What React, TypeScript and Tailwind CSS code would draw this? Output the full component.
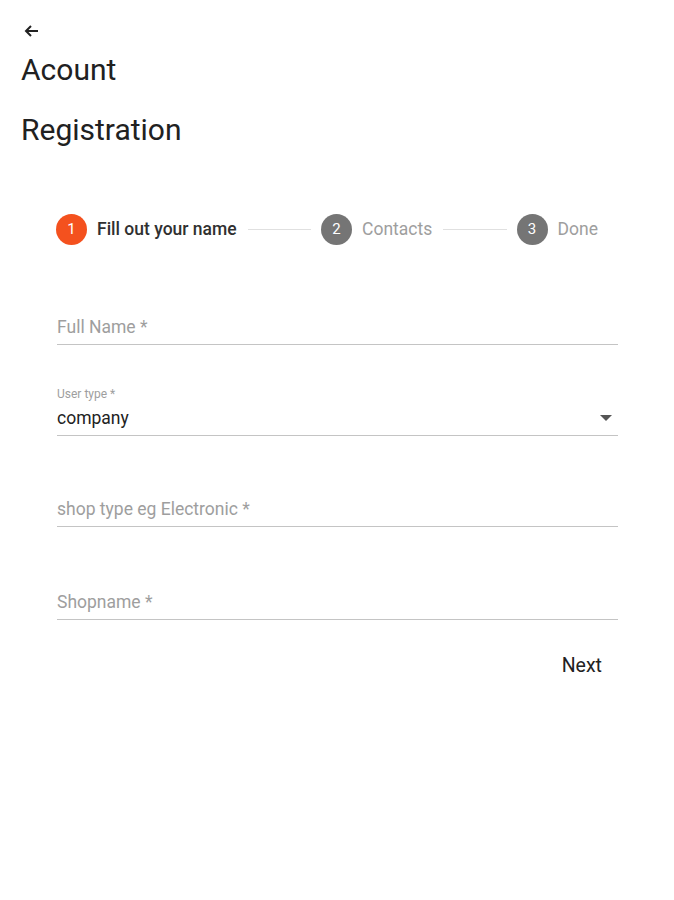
import { Fragment } from "react";

const steps = [
  { n: 1, label: "Fill out your name", active: true },
  { n: 2, label: "Contacts", active: false },
  { n: 3, label: "Done", active: false },
];

function Field({ placeholder }: { placeholder: string }) {
  return (
    <div className="border-b border-[#c4c4c4] h-[37px] flex items-center pt-[3px]">
      <span className="text-[17.5px] text-[#9e9e9e]">{placeholder}</span>
    </div>
  );
}

export default function App() {
  return (
    <div className="min-h-[900px] bg-white text-[#212121]" style={{ fontFamily: "Roboto, 'Liberation Sans', sans-serif" }}>
      <div className="pl-[21px] pt-[23px]">
        <svg width="18" height="16" viewBox="0 0 18 16" className="ml-[1px]">
          <path d="M16 8H4M9 3L4 8l5 5" fill="none" stroke="#222" strokeWidth="2" />
        </svg>
        <h1 className="text-[30px] leading-[36px] mt-[13px]">Acount</h1>
        <h1 className="text-[30px] leading-[36px] mt-[24px]">Registration</h1>
      </div>

      {/* stepper */}
      <div className="flex items-center pl-[56px] pr-[76px] mt-[66px]">
        {steps.map((s, i) => (
          <Fragment key={s.n}>
            {i > 0 && <div className="flex-1 h-px bg-[#e0e0e0] ml-[11px] mr-[10px]" />}
            <div className="flex items-center">
              <div
                className={`w-[31px] h-[31px] rounded-full flex items-center justify-center text-white text-[15px] ${
                  s.active ? "bg-[#f4511e]" : "bg-[#757575]"
                }`}
              >
                {s.n}
              </div>
              <span
                className={`ml-[10px] text-[17.5px] whitespace-nowrap ${
                  s.active ? "font-medium text-[#303030]" : "text-[#9e9e9e]"
                }`}
              >
                {s.label}
              </span>
            </div>
          </Fragment>
        ))}
      </div>

      <div className="mx-[57px] mt-[63px] w-[561px]">
        <Field placeholder="Full Name *" />

        <div className="mt-[42px] border-b border-[#c4c4c4]">
          <div className="text-[12px] text-[#9e9e9e] leading-[14px]">User type *</div>
          <div className="flex items-center justify-between h-[34px]">
            <span className="text-[17.5px] text-[#222]">company</span>
            <svg width="14" height="8" viewBox="0 0 14 8" className="mr-[5px]">
              <path d="M1 1h12L7 7z" fill="#555" />
            </svg>
          </div>
        </div>

        <div className="mt-[54px]">
          <Field placeholder="shop type eg Electronic *" />
        </div>
        <div className="mt-[56px]">
          <Field placeholder="Shopname *" />
        </div>

        <div className="flex justify-end mt-[31px] pr-[16px]">
          <span className="text-[19.5px] text-[#222]">Next</span>
        </div>
      </div>
    </div>
  );
}
